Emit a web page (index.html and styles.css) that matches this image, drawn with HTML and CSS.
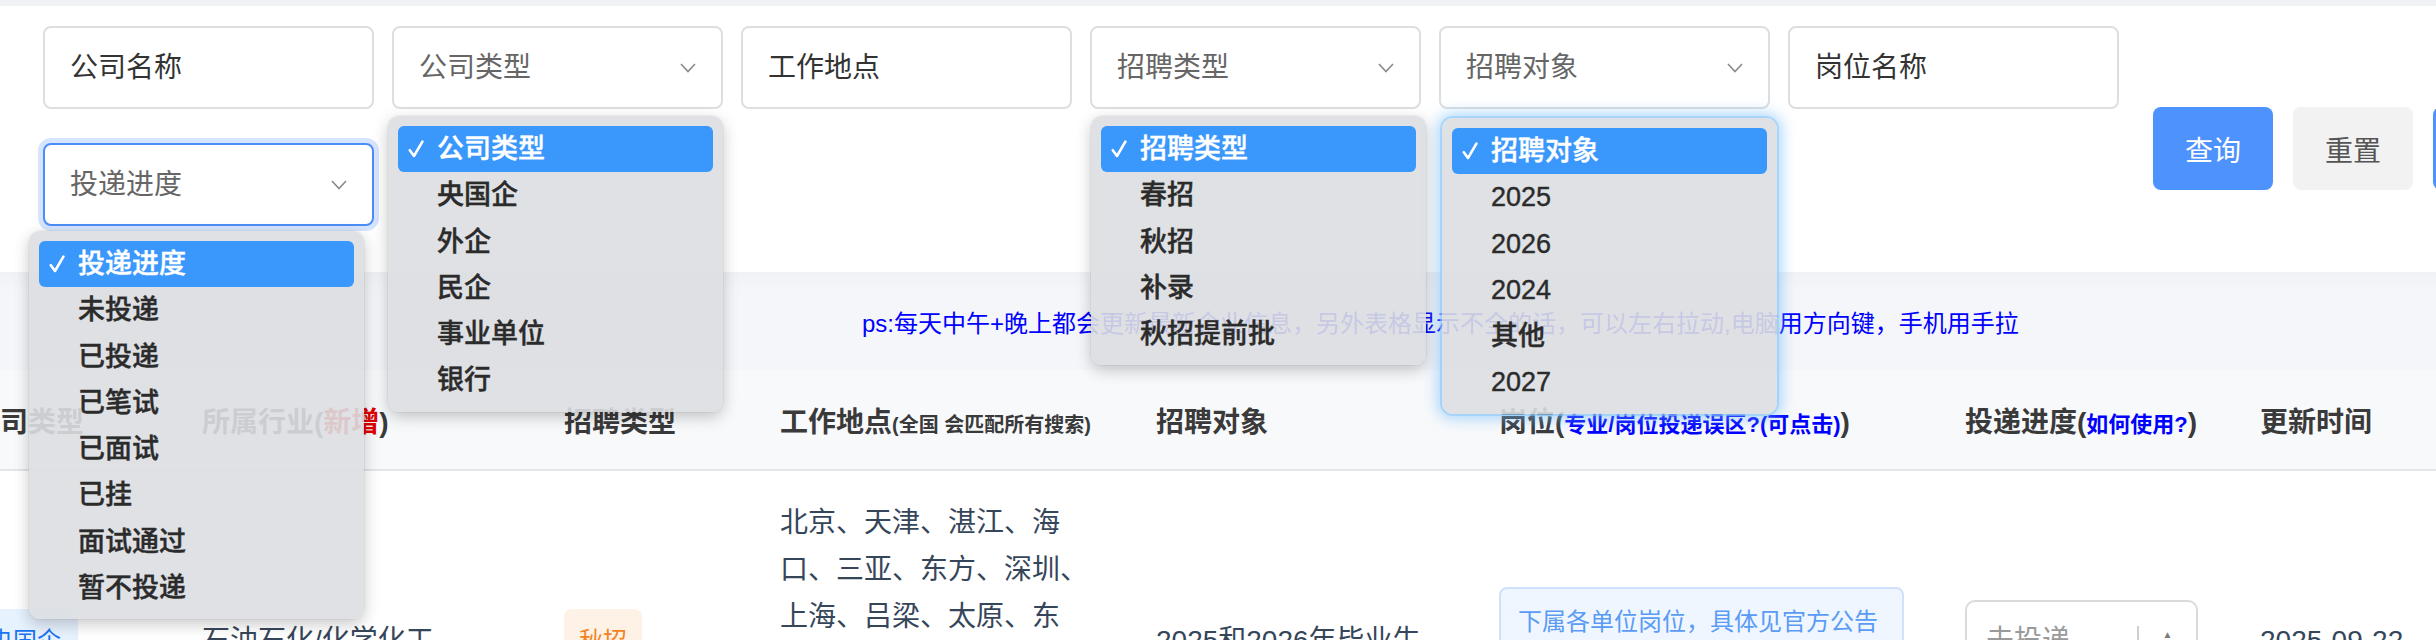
FILE: index.html
```html
<!DOCTYPE html>
<html lang="zh-CN">
<head>
<meta charset="utf-8">
<title>企业招聘信息</title>
<link rel="stylesheet" href="styles.css">
</head>
<body>
<div class="topbar"></div>
<section class="filters">
  <div class="fields">
    <div class="field">公司名称</div>
    <div class="field select"><span>公司类型</span><svg class="chev" viewBox="0 0 16 10"><polyline points="1,1 8,8.5 15,1"/></svg></div>
    <div class="field">工作地点</div>
    <div class="field select"><span>招聘类型</span><svg class="chev" viewBox="0 0 16 10"><polyline points="1,1 8,8.5 15,1"/></svg></div>
    <div class="field select"><span>招聘对象</span><svg class="chev" viewBox="0 0 16 10"><polyline points="1,1 8,8.5 15,1"/></svg></div>
    <div class="field">岗位名称</div>
    <div class="field select focused"><span>投递进度</span><svg class="chev" viewBox="0 0 16 10"><polyline points="1,1 8,8.5 15,1"/></svg></div>
  </div>
  <div class="actions">
    <button class="btn primary">查询</button>
    <button class="btn plain">重置</button>
    <button class="btn primary"></button>
  </div>
</section>

<div class="notice">ps:每天中午+晚上都会更新最新企业信息，另外表格显示不全的话，可以左右拉动,电脑用方向键，手机用手拉</div>

<div class="table">
  <div class="thead">
    <div class="th">公司类型</div>
    <div class="th">所属行业(<span class="red">新增</span>)</div>
    <div class="th">招聘类型</div>
    <div class="th">工作地点<small>(全国 会匹配所有搜索)</small></div>
    <div class="th">招聘对象</div>
    <div class="th">岗位(<span class="hl">专业/岗位投递误区?(可点击)</span>)</div>
    <div class="th">投递进度(<span class="hl">如何使用?</span>)</div>
    <div class="th">更新时间</div>
  </div>
  <div class="trow">
    <div class="td"><span class="tag blue">央国企</span></div>
    <div class="td">石油石化/化学化工</div>
    <div class="td"><span class="tag orange">秋招</span></div>
    <div class="td loc"><span>北京、天津、湛江、海</span><span>口、三亚、东方、深圳、</span><span>上海、吕梁、太原、东</span></div>
    <div class="td">2025和2026年毕业生</div>
    <div class="td"><div class="posbox">下属各单位岗位，具体见官方公告</div></div>
    <div class="td"><div class="stepsel"><span>未投递</span><i class="step"><b>▲</b><b>▼</b></i></div></div>
    <div class="td">2025-09-22</div>
  </div>
</div>

<ul class="menu m-progress">
  <li class="sel"><svg class="check" viewBox="0 0 16 18"><path d="M1.8 10.2 L6 16 L14.4 1.6"/></svg>投递进度</li>
  <li>未投递</li>
  <li>已投递</li>
  <li>已笔试</li>
  <li>已面试</li>
  <li>已挂</li>
  <li>面试通过</li>
  <li>暂不投递</li>
</ul>
<ul class="menu m-company">
  <li class="sel"><svg class="check" viewBox="0 0 16 18"><path d="M1.8 10.2 L6 16 L14.4 1.6"/></svg>公司类型</li>
  <li>央国企</li>
  <li>外企</li>
  <li>民企</li>
  <li>事业单位</li>
  <li>银行</li>
</ul>
<ul class="menu m-recruit">
  <li class="sel"><svg class="check" viewBox="0 0 16 18"><path d="M1.8 10.2 L6 16 L14.4 1.6"/></svg>招聘类型</li>
  <li>春招</li>
  <li>秋招</li>
  <li>补录</li>
  <li>秋招提前批</li>
</ul>
<ul class="menu m-target">
  <li class="sel"><svg class="check" viewBox="0 0 16 18"><path d="M1.8 10.2 L6 16 L14.4 1.6"/></svg>招聘对象</li>
  <li>2025</li>
  <li>2026</li>
  <li>2024</li>
  <li>其他</li>
  <li>2027</li>
</ul>
</body>
</html>
```

FILE: styles.css
```css
html, body {
  margin: 0;
  padding: 0;
  overflow: hidden;
  background: #fff;
}
body {
  position: relative;
  width: 2436px;
  height: 640px;
  font-family: "Liberation Sans", "Noto Sans CJK SC", sans-serif;
  color: #333;
}

.topbar {
  height: 6px;
  background: #f1f2f6;
}

/* filters */
.filters {
  display: flex;
  align-items: flex-start;
  gap: 34px;
  padding: 20px 0 0 43px;
}
.fields {
  flex: none;
  width: 2076px;
  display: flex;
  flex-wrap: wrap;
  column-gap: 18px;
  row-gap: 34px;
}
.field {
  box-sizing: border-box;
  width: 331px;
  height: 83px;
  border: 2px solid #dedede;
  border-radius: 8px;
  background: #fff;
  display: flex;
  align-items: center;
  justify-content: space-between;
  padding: 0 25px;
  font-size: 28px;
  line-height: 1;
  color: #333;
}
.field.select { color: #666; }
.field.focused {
  border-color: #4b8ef7;
  box-shadow: 0 0 0 5px #d6e5fd;
}
.chev {
  width: 16px;
  height: 10px;
  fill: none;
  stroke: #8a8a8a;
  stroke-width: 1.6;
}
.actions {
  flex: none;
  display: flex;
  gap: 20px;
  margin-top: 81px;
}
.btn {
  width: 120px;
  height: 83px;
  border: none;
  border-radius: 8px;
  padding: 0;
  font-family: inherit;
  font-size: 28px;
}
.btn.primary { background: #4e92fd; color: #fff; }
.btn.plain { background: #f2f2f2; color: #555; }

/* notice */
.notice {
  margin-top: 46px;
  height: 98px;
  box-sizing: border-box;
  background: linear-gradient(#f1f2f5, #f5f6f9 20%);
  display: flex;
  align-items: center;
  padding-left: 862px;
  font-size: 24px;
  color: #0000ff;
  white-space: nowrap;
}

/* table */
.table { margin-left: -28px; }
.thead, .trow {
  display: grid;
  grid-template-columns: 230px 362px 216px 376px 343px 466px 295px 200px;
}
.thead {
  height: 99px;
  background: #f8f9fb;
  border-bottom: 2px solid #e4e5e8;
  align-items: center;
  font-size: 28px;
  font-weight: bold;
  color: #3a3a3a;
  white-space: nowrap;
}
.th small { font-size: 20px; }
.th .red { color: #e00000; }
.th .hl { color: #0000ff; font-size: 22px; }

.trow {
  height: 340px;
  align-items: center;
  font-size: 28px;
  color: #36465a;
  white-space: nowrap;
}
.td { line-height: 40px; }
.tag {
  display: inline-block;
  height: 64px;
  line-height: 64px;
  border-radius: 8px;
  font-size: 24px;
}
.tag.blue { background: #e7f2ff; color: #1a73f0; padding: 0 17px; }
.tag.orange { background: #fdf2e5; color: #f58220; padding: 0 15px; }
.loc {
  align-self: start;
  padding-top: 28px;
  display: flex;
  flex-direction: column;
  line-height: 47px;
}
.posbox {
  box-sizing: border-box;
  width: 405px;
  min-height: 108px;
  padding: 16px 17px;
  border: 2px solid #cfe1fb;
  border-radius: 8px;
  background: #eff6ff;
  color: #5a9bf5;
  font-size: 24px;
  line-height: 34px;
}
.stepsel {
  box-sizing: border-box;
  width: 233px;
  height: 82px;
  border: 2px solid #dadada;
  border-radius: 10px;
  display: flex;
  align-items: center;
  padding-left: 19px;
  color: #9a9a9a;
}
.step {
  margin-left: auto;
  width: 59px;
  height: 30px;
  box-sizing: border-box;
  border-left: 2px solid #cfcfcf;
  display: flex;
  flex-direction: column;
  align-items: center;
  justify-content: center;
  font-style: normal;
  font-size: 10px;
  line-height: 13px;
  color: #7a7a7a;
}
.step b { font-weight: normal; }

/* native-looking dropdown menus */
.menu {
  position: absolute;
  box-sizing: border-box;
  width: 335px;
  margin: 0;
  padding: 10px 10px 8px;
  list-style: none;
  background: rgba(220, 222, 225, 0.9);
  border-radius: 11px;
  box-shadow: 0 5px 16px rgba(0, 0, 0, 0.22), 0 0 0 1px rgba(0, 0, 0, 0.04);
  font-size: 27px;
  font-weight: 500;
  color: #2b2b2b;
}
.menu li {
  position: relative;
  height: 46.3px;
  line-height: 46.3px;
  padding-left: 39px;
  border-radius: 6px;
  -webkit-text-stroke: 0.4px currentColor;
}
.menu li.sel {
  background: #3a97fc;
  color: #fff;
}
.check {
  position: absolute;
  left: 10px;
  top: 14px;
  width: 16px;
  height: 18px;
  fill: none;
  stroke: #fff;
  stroke-width: 2.6;
  stroke-linecap: round;
  stroke-linejoin: round;
}
.m-progress { left: 29px; top: 231px; }
.m-company { left: 388px; top: 116px; }
.m-recruit { left: 1091px; top: 116px; }
.m-target {
  left: 1442px;
  top: 118px;
  box-shadow: 0 0 0 2px rgba(140, 200, 250, 0.55), 0 0 14px 5px rgba(110, 185, 250, 0.55);
}
```
